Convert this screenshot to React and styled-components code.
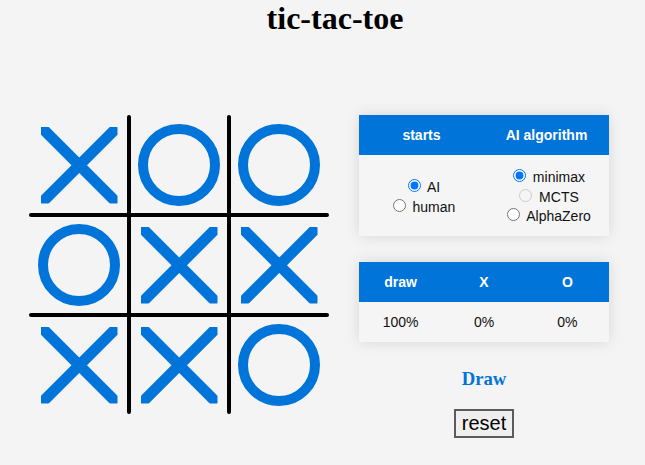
import React, { useState } from 'react'
import styled, { createGlobalStyle } from 'styled-components'

const GlobalStyle = createGlobalStyle`
  body {
    margin: 0;
    background: #f4f4f4;
    font-family: "Liberation Sans", Arial, sans-serif;
  }
`

const Page = styled.div`
  width: 645px;
`

const Title = styled.h1`
  margin: 0;
  padding-left: 25px;
  text-align: center;
  font-family: "Liberation Serif", "Times New Roman", serif;
  font-size: 32px;
  font-weight: bold;
  color: #000;
`

const Main = styled.div`
  display: flex;
  align-items: flex-start;
  gap: 30px;
  padding: 78px 0 0 29px;
`

const BoardSvg = styled.svg`
  display: block;
  width: 300px;
  height: 300px;
  flex-shrink: 0;
`

const Side = styled.div`
  width: 250px;
  display: flex;
  flex-direction: column;
  align-items: center;
  text-align: center;
`

const Panel = styled.div`
  width: 100%;
  background: #f5f5f5;
  box-shadow: 0 0 14px rgba(0, 0, 0, 0.12);
  margin-bottom: ${p => p.$mb || 0}px;
`

const HeadRow = styled.div`
  display: grid;
  grid-template-columns: repeat(${p => p.$cols}, 1fr);
  height: 40px;
  align-items: center;
  background: #0074d9;
  color: #fff;
  font-size: 14px;
  font-weight: bold;
`

const BodyRow = styled.div`
  display: grid;
  grid-template-columns: repeat(${p => p.$cols}, 1fr);
  align-items: center;
  min-height: 40px;
  padding: ${p => p.$pad || 0}px 0;
  font-size: 14px;
  color: #111;
`

const Option = styled.label`
  display: block;
  height: 19.5px;
  line-height: 19.5px;
  white-space: nowrap;

  input {
    margin: 3px 3px 0 5px;
  }
`

const Result = styled.h3`
  margin: 0 0 19px;
  font-family: "Liberation Serif", "Times New Roman", serif;
  font-size: 18.72px;
  font-weight: bold;
  color: #0074d9;
`

const ResetButton = styled.button`
  font-family: "Liberation Sans", Arial, sans-serif;
  font-size: 20px;
  padding: 1px 6px;
  background: #efefef;
  color: #000;
  border: 2px solid #5b5b5b;
  border-radius: 0;
`

const board = ['X', 'O', 'O', 'O', 'X', 'X', 'X', 'X', 'O']

const BLUE = '#0074d9'

function Mark({ value, i }) {
  const x = (i % 3) * 100
  const y = Math.floor(i / 3) * 100
  if (value === 'X') {
    return (
      <g transform={`translate(${x},${y})`}>
        <g clipPath="url(#xbox)">
          <line x1="12" y1="12" x2="88.5" y2="88.5" stroke={BLUE} strokeWidth="11" />
          <line x1="88.5" y1="12" x2="12" y2="88.5" stroke={BLUE} strokeWidth="11" />
        </g>
      </g>
    )
  }
  if (value === 'O') {
    return <circle cx={x + 50} cy={y + 50} r="36" fill="none" stroke={BLUE} strokeWidth="10" />
  }
  return null
}

function Board() {
  return (
    <BoardSvg viewBox="0 0 300 300">
      <defs>
        <clipPath id="xbox" clipPathUnits="userSpaceOnUse">
          <rect x="12" y="12" width="76.5" height="76.5" />
        </clipPath>
      </defs>
      <g stroke="#000" strokeWidth="4" strokeLinecap="round">
        <line x1="100" y1="2" x2="100" y2="297" />
        <line x1="200" y1="2" x2="200" y2="297" />
        <line x1="2" y1="100" x2="298" y2="100" />
        <line x1="2" y1="200" x2="298" y2="200" />
      </g>
      {board.map((v, i) => <Mark key={i} value={v} i={i} />)}
    </BoardSvg>
  )
}

export default function App() {
  const [starts, setStarts] = useState('AI')
  const [algo, setAlgo] = useState('minimax')

  return (
    <Page>
      <GlobalStyle />
      <Title>tic-tac-toe</Title>
      <Main>
        <Board />
        <Side>
          <Panel $mb={26}>
            <HeadRow $cols={2}>
              <div>starts</div>
              <div>AI algorithm</div>
            </HeadRow>
            <BodyRow $cols={2} $pad={11.25}>
              <div>
                <Option>
                  <input type="radio" name="starts" checked={starts === 'AI'} onChange={() => setStarts('AI')} /> AI
                </Option>
                <Option>
                  <input type="radio" name="starts" checked={starts === 'human'} onChange={() => setStarts('human')} /> human
                </Option>
              </div>
              <div>
                <Option>
                  <input type="radio" name="algo" checked={algo === 'minimax'} onChange={() => setAlgo('minimax')} /> minimax
                </Option>
                <Option>
                  <input type="radio" name="algo" disabled checked={algo === 'MCTS'} onChange={() => setAlgo('MCTS')} /> MCTS
                </Option>
                <Option>
                  <input type="radio" name="algo" checked={algo === 'AlphaZero'} onChange={() => setAlgo('AlphaZero')} /> AlphaZero
                </Option>
              </div>
            </BodyRow>
          </Panel>
          <Panel $mb={26}>
            <HeadRow $cols={3}>
              <div>draw</div>
              <div>X</div>
              <div>O</div>
            </HeadRow>
            <BodyRow $cols={3}>
              <div>100%</div>
              <div>0%</div>
              <div>0%</div>
            </BodyRow>
          </Panel>
          <Result>Draw</Result>
          <ResetButton>reset</ResetButton>
        </Side>
      </Main>
    </Page>
  )
}
